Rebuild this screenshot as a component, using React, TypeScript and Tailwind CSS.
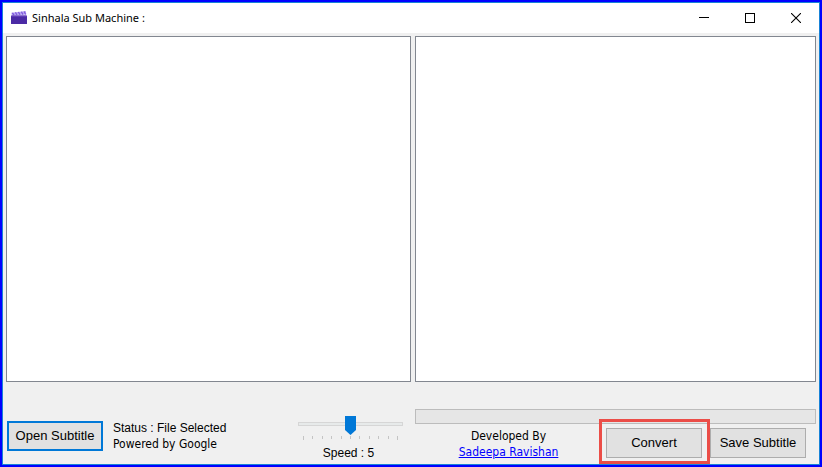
import { useState } from "react"

const TICKS = [0, 1, 2, 3, 4, 5, 6, 7, 8, 9, 10]

function ClapperIcon() {
  return (
    <svg width="16" height="14" viewBox="0 0 16 14" aria-hidden="true">
      <path d="M0.4 1.8 L14.8 0 L15.4 3.6 L0.8 4.6 Z" fill="#b9a5f2" />
      <path
        d="M1.4 1.8 L3 4.2 M4.4 1.4 L6 4 M7.4 1 L9 3.8 M10.4 0.7 L12 3.6 M13.2 0.4 L14.6 3.4"
        stroke="#7d58dc"
        strokeWidth="1.2"
      />
      <rect x="0" y="4.6" width="16" height="8.4" rx="0.6" fill="#4b2aa5" />
      <rect x="0.5" y="4.6" width="15" height="1" fill="#6a45c4" />
    </svg>
  )
}

function TitleBar() {
  return (
    <header className="flex h-[30px] items-center bg-white pl-2">
      <ClapperIcon />
      <h1 className="flex-1 pl-[5px] font-['Noto_Sans','Open_Sans',sans-serif] text-[11px] leading-4 text-black">
        Sinhala Sub Machine :
      </h1>
      <div className="flex h-full">
        <button aria-label="Minimize" className="flex h-full w-[46px] items-center justify-center">
          <svg width="10" height="10" viewBox="0 0 10 10">
            <path d="M0 4.5H10" stroke="#000" />
          </svg>
        </button>
        <button aria-label="Maximize" className="flex h-full w-[46px] items-center justify-center">
          <svg width="10" height="10" viewBox="0 0 10 10">
            <rect x="0.5" y="0.5" width="9" height="9" fill="none" stroke="#000" />
          </svg>
        </button>
        <button aria-label="Close" className="flex h-full w-[46px] items-center justify-center">
          <svg width="10" height="10" viewBox="0 0 10 10">
            <path d="M0 0L10 10M10 0L0 10" stroke="#000" strokeWidth="1.1" />
          </svg>
        </button>
      </div>
    </header>
  )
}

export default function App() {
  const [source, setSource] = useState("")
  const [result, setResult] = useState("")
  const [speed, setSpeed] = useState(5)

  return (
    <div className="min-h-screen flex flex-col border-2 border-[#0000ff] bg-[#f0f0f0] font-['Liberation_Sans',Arial,sans-serif] text-black">
      <div className="flex flex-1 flex-col border border-[#1883d7]">
        <TitleBar />

        <main className="grid flex-1 grid-cols-[405fr_401fr] grid-rows-[1fr_auto] gap-x-1 p-[3px] pb-0">
          <textarea
            aria-label="Original subtitle"
            value={source}
            onChange={(e) => setSource(e.target.value)}
            className="block resize-none border border-[#828790] bg-white p-1 text-xs outline-none"
          />
          <textarea
            aria-label="Converted subtitle"
            value={result}
            onChange={(e) => setResult(e.target.value)}
            className="block resize-none border border-[#828790] bg-white p-1 text-xs outline-none"
          />

          <div className="flex items-start pl-px pr-2 pt-[34px]">
            <button className="mt-[5px] h-[30px] w-24 shrink-0 border-2 border-[#0078d7] bg-[#e1e1e1] text-[13px] leading-4 whitespace-nowrap">
              Open Subtitle
            </button>
            <div className="flex-1 pl-[10px] pt-1 text-xs leading-4">
              <p>Status : File Selected</p>
              <p className="font-['DejaVu_Sans_Condensed',Tahoma,sans-serif]">Powered by Google</p>
            </div>
            <div className="flex w-[105px] flex-col items-center">
              <input
                id="speed"
                type="range"
                min={0}
                max={10}
                value={speed}
                onChange={(e) => setSpeed(Number(e.target.value))}
                className="block h-4 w-full appearance-none bg-transparent outline-none [&::-webkit-slider-runnable-track]:h-1 [&::-webkit-slider-runnable-track]:border [&::-webkit-slider-runnable-track]:border-[#d6d6d6] [&::-webkit-slider-runnable-track]:bg-[#e7eaea] [&::-webkit-slider-thumb]:-mt-[7px] [&::-webkit-slider-thumb]:h-[19px] [&::-webkit-slider-thumb]:w-[11px] [&::-webkit-slider-thumb]:appearance-none [&::-webkit-slider-thumb]:bg-[#0078d7] [&::-webkit-slider-thumb]:[clip-path:polygon(0_0,100%_0,100%_74%,50%_100%,0_74%)]"
              />
              <div className="flex w-[95px] justify-between pt-1">
                {TICKS.map((tick) => (
                  <span key={tick} className="h-[3px] w-px bg-[#c4c4c4] first:h-1 last:h-1" />
                ))}
              </div>
              <label htmlFor="speed" className="pr-1 pt-[5px] text-xs leading-4">
                Speed : {speed}
              </label>
            </div>
          </div>

          <div className="pt-[27px] pb-1">
            <div
              role="progressbar"
              aria-label="Conversion progress"
              aria-valuenow={0}
              className="h-[15px] border border-[#bcbcbc] bg-[#e6e6e6]"
            />
            <div className="flex items-start pr-[10px] pt-1">
              <div className="flex-1 pr-1 text-center font-['DejaVu_Sans_Condensed',Tahoma,sans-serif] text-xs leading-4">
                <p>Developed By</p>
                <a href="#" className="text-[#0000ff] underline">
                  Sadeepa Ravishan
                </a>
              </div>
              <div className="flex gap-2">
                <div className="relative">
                  <button className="block h-[30px] w-24 border border-[#adadad] bg-[#e1e1e1] text-[13px] leading-4">
                    Convert
                  </button>
                  <span className="pointer-events-none absolute -top-[9px] -right-2 -bottom-[6px] -left-[7px] border-[3px] border-[#eb4d47]" />
                </div>
                <button className="block h-[30px] w-24 border border-[#adadad] bg-[#e1e1e1] text-[13px] leading-4 whitespace-nowrap">
                  Save Subtitle
                </button>
              </div>
            </div>
          </div>
        </main>
      </div>
    </div>
  )
}
